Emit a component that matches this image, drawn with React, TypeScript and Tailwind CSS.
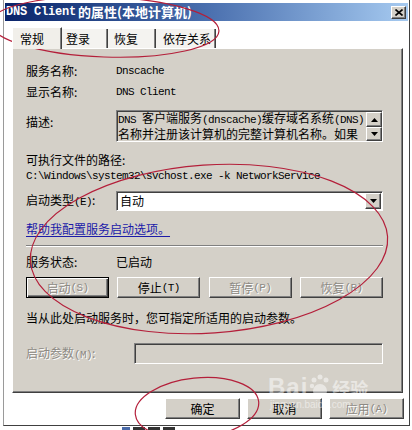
import React from "react";

const mono = "font-['Liberation_Mono',monospace] text-[11px] tracking-[-0.6px]";

function M({ children }: { children: React.ReactNode }) {
  return <span className={mono}>{children}</span>;
}

function Btn({
  children,
  disabled,
  framed,
  className,
}: {
  children: React.ReactNode;
  disabled?: boolean;
  framed?: boolean;
  className?: string;
}) {
  const base = framed
    ? "border border-black shadow-[inset_1px_1px_0_#ffffff,inset_-1px_-1px_0_#404040,inset_-2px_-2px_0_#808080]"
    : "border border-t-white border-l-white border-r-[#404040] border-b-[#404040] shadow-[inset_-1px_-1px_0_#808080]";
  return (
    <div
      className={`${base} bg-[#d4d0c8] h-[21px] flex items-center justify-center ${
        disabled ? "text-[#8d8a84] [text-shadow:1px_1px_0_#ffffff]" : "text-black"
      } ${className ?? ""}`}
    >
      {children}
    </div>
  );
}

function Tri({ down }: { down?: boolean }) {
  return (
    <svg width="7" height="4" viewBox="0 0 7 4">
      {down ? <polygon points="0,0 7,0 3.5,4" fill="#000" /> : <polygon points="0,4 7,4 3.5,0" fill="#000" />}
    </svg>
  );
}

function SmallBtn({ down, h }: { down?: boolean; h: string }) {
  return (
    <div
      className={`w-[16px] ${h} bg-[#d4d0c8] border border-t-white border-l-white border-r-[#404040] border-b-[#404040] shadow-[inset_-1px_-1px_0_#808080] flex items-center justify-center`}
    >
      <Tri down={down} />
    </div>
  );
}

export default function App() {
  return (
    <div className="relative w-[412px] h-[430px] overflow-hidden bg-white font-['Noto_Sans_CJK_SC',sans-serif] text-[12px] leading-[16px] text-black">
      <div className="pl-[3px]">
        <div className="w-[407px] h-[426px] border-l border-l-[#9a9a9a] border-r border-r-[#404040] border-b border-b-[#404040] bg-white flex flex-col">
          {/* title bar */}
          <div className="mt-[3px] mx-[1px] h-[18px] bg-gradient-to-r from-[#0a246a] via-[#4a6fae] to-[#a6caf0] flex items-center justify-between">
            <div className="pl-[1px] text-white font-bold flex items-center whitespace-nowrap">
              <span className="font-['Liberation_Mono',monospace] text-[12px] tracking-[-0.2px] font-bold">DNS Client </span>
              <span className="text-[13px] ml-[2px]">的属性(本地计算机)</span>
            </div>
            <div className="mr-[2px] w-[15px] h-[13px] bg-[#d4d0c8] border border-t-white border-l-white border-r-[#404040] border-b-[#404040] shadow-[inset_-1px_-1px_0_#808080] flex items-center justify-center">
              <svg width="8" height="7" viewBox="0 0 8 7">
                <path d="M0.5 0.5 L7.5 6.5 M7.5 0.5 L0.5 6.5" stroke="#000" strokeWidth="1.6" />
              </svg>
            </div>
          </div>

          {/* tabs */}
          <div className="mt-[5px] ml-[8px] flex items-end h-[22px]">
            <div className="w-[50px] h-[22px] bg-[#f1efea] border-t border-l border-white border-r border-r-[#404040] shadow-[inset_-1px_0_0_#808080] flex items-center pl-[7px] relative z-10 -mb-[1px]">
              常规
            </div>
            <div className="w-[46px] h-[19px] bg-[#f4f3f0] border-r border-r-[#404040] shadow-[inset_-1px_0_0_#808080] flex items-center pl-[4px]">
              登录
            </div>
            <div className="w-[48px] h-[19px] bg-[#f4f3f0] border-r border-r-[#404040] shadow-[inset_-1px_0_0_#808080] flex items-center pl-[6px]">
              恢复
            </div>
            <div className="w-[60px] h-[19px] bg-[#f4f3f0] border-r border-r-[#404040] shadow-[inset_-1px_0_0_#808080] flex items-center pl-[7px]">
              依存关系
            </div>
          </div>

          {/* panel */}
          <div className="ml-[8px] w-[391px] h-[345px] bg-[#d4d0c8] border-t border-l border-white border-r border-b border-r-[#404040] border-b-[#404040] shadow-[inset_-1px_-1px_0_#808080] flex flex-col pt-[14px] pl-[13px] pr-[19px]">
            <div className="flex h-[16px] items-center">
              <span className="w-[90px]">服务名称:</span>
              <M>Dnscache</M>
            </div>
            <div className="mt-[5px] flex h-[16px] items-center">
              <span className="w-[90px]">显示名称:</span>
              <M>DNS Client</M>
            </div>
            <div className="mt-[10px] flex">
              <span className="w-[90px] pt-[4px]">描述:</span>
              <div className="flex-1 h-[32px] border border-t-[#808080] border-l-[#808080] border-b-white border-r-white shadow-[inset_1px_1px_0_#404040] flex justify-between">
                <div className="pl-[1px] pt-[1px] leading-[14px] -mt-[1px] whitespace-nowrap">
                  <div>
                    <M>DNS </M>客户端服务<M>(dnscache)</M>缓存域名系统<M>(DNS)</M>
                  </div>
                  <div>名称并注册该计算机的完整计算机名称。如果</div>
                </div>
                <div className="flex flex-col justify-between pt-[1px]">
                  <SmallBtn h="h-[15px]" />
                  <SmallBtn down h="h-[14px]" />
                </div>
              </div>
            </div>
            <div className="mt-[10px] h-[16px] flex items-center">可执行文件的路径:</div>
            <div className="h-[16px] flex items-center whitespace-nowrap">
              <M>{"C:\\Windows\\system32\\svchost.exe -k NetworkService"}</M>
            </div>
            <div className="mt-[7px] flex items-center h-[20px]">
              <span className="w-[90px]">
                启动类型<M>(E)</M>:
              </span>
              <div className="flex-1 h-[20px] bg-white border border-t-[#808080] border-l-[#808080] border-b-white border-r-white shadow-[inset_1px_1px_0_#404040] flex items-center justify-between pl-[3px] pr-[1px]">
                <span>自动</span>
                <SmallBtn down h="h-[16px]" />
              </div>
            </div>
            <div className="mt-[10px] h-[16px] flex items-center">
              <span className="text-[#1b1ba8] underline underline-offset-2">帮助我配置服务启动选项。</span>
            </div>
            <div className="mt-[8px] h-[2px] border-t border-t-[#808080] border-b border-b-white" />
            <div className="mt-[7px] flex h-[16px] items-center">
              <span className="w-[90px]">服务状态:</span>
              <span>已启动</span>
            </div>
            <div className="mt-[7px] flex justify-between">
              <Btn disabled framed className="w-[83px]">
                启动<M>(S)</M>
              </Btn>
              <Btn className="w-[83px]">
                停止<M>(T)</M>
              </Btn>
              <Btn disabled className="w-[83px]">
                暂停<M>(P)</M>
              </Btn>
              <Btn disabled className="w-[83px]">
                恢复<M>(R)</M>
              </Btn>
            </div>
            <div className="mt-[12px] h-[16px] flex items-center whitespace-nowrap">
              当从此处启动服务时，您可指定所适用的启动参数。
            </div>
            <div className="mt-[17px] flex items-center">
              <span className="w-[108px] text-[#8d8a84] [text-shadow:1px_1px_0_#ffffff]">
                启动参数<M>(M)</M>:
              </span>
              <div className="flex-1 h-[21px] bg-[#d4d0c8] border border-t-[#808080] border-l-[#808080] border-b-white border-r-white shadow-[inset_1px_1px_0_#404040]" />
            </div>
          </div>

          {/* dialog buttons */}
          <div className="mt-[5px] flex justify-end gap-[7px] pr-[5px]">
            <Btn className="w-[75px]">确定</Btn>
            <Btn className="w-[75px]">取消</Btn>
            <Btn disabled className="w-[75px]">
              应用<M>(A)</M>
            </Btn>
          </div>
        </div>
      </div>

      {/* background fragment at bottom (partially visible window behind) */}
      <div className="absolute left-[122px] top-[427px] flex items-start gap-[3px]">
        <div className="w-[8px] h-[3px] bg-[#4a6aa8]" />
        <div className="w-[12px] h-[3px] bg-[#333]" />
        <div className="w-[12px] h-[3px] bg-[#333]" />
        <div className="w-[12px] h-[3px] bg-[#333]" />
      </div>

      {/* Baidu watermark */}
      <div className="absolute left-[268px] top-[374px] pointer-events-none opacity-50 text-white flex flex-col items-start">
        <div className="flex items-end">
          <span className="font-['Liberation_Sans',sans-serif] font-bold text-[24px] leading-[26px] tracking-[1px]">Bai</span>
          <svg width="22" height="26" viewBox="0 0 22 26" className="mx-[1px]">
            <circle cx="5" cy="6" r="2.5" fill="#fff" />
            <circle cx="11" cy="3" r="2.5" fill="#fff" />
            <circle cx="17" cy="6" r="2.5" fill="#fff" />
            <circle cx="3" cy="12" r="2.2" fill="#fff" />
            <ellipse cx="11" cy="17" rx="7" ry="7" fill="#fff" />
          </svg>
          <span className="text-[18px] leading-[24px] font-bold">经验</span>
        </div>
        <span className="font-['Liberation_Sans',sans-serif] text-[10px] leading-[10px] ml-[2px]">jingyan.baidu.com</span>
      </div>

      {/* red annotation ellipses */}
      <svg className="absolute inset-0 pointer-events-none" width="412" height="430" viewBox="0 0 412 430">
        <ellipse cx="105" cy="27" rx="114" ry="30" fill="none" stroke="#b41f3a" strokeWidth="1.2" transform="rotate(2 105 27)" />
        <ellipse cx="209" cy="249" rx="179" ry="84" fill="none" stroke="#b41f3a" strokeWidth="1.2" transform="rotate(-4 209 249)" />
        <ellipse cx="197" cy="408" rx="62" ry="30" fill="none" stroke="#b41f3a" strokeWidth="1.2" transform="rotate(-6 197 408)" />
      </svg>
    </div>
  );
}
